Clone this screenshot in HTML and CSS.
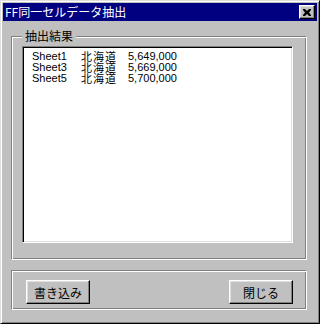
FILE: index.html
```html
<!DOCTYPE html>
<html lang="ja">
<head>
    <meta charset="UTF-8">
    <title>FF同一セルデータ抽出</title>
    <link rel="stylesheet" href="styles.css">
</head>
<body>
    <!-- Dialog window -->
    <div class="window">
        <div class="titlebar">
            <span class="title">FF同一セルデータ抽出</span>
            <button class="close-btn" aria-label="閉じる">
                <svg width="8" height="7" viewBox="0 0 8 7">
                    <path d="M0 0h2l2 2 2-2h2v1l-2 2.5 2 2.5v1h-2l-2-2-2 2h-2v-1l2-2.5-2-2.5z" fill="#000"/>
                </svg>
            </button>
        </div>

        <div class="dialog-body">
            <!-- Result group -->
            <div class="group result-group">
                <span class="group-label">抽出結果</span>
                <div class="listbox">
                    <div class="row"><span class="c-sheet">Sheet1</span><span class="c-pref">北海道</span><span class="c-num">5,649,000</span></div>
                    <div class="row"><span class="c-sheet">Sheet3</span><span class="c-pref">北海道</span><span class="c-num">5,669,000</span></div>
                    <div class="row"><span class="c-sheet">Sheet5</span><span class="c-pref">北海道</span><span class="c-num">5,700,000</span></div>
                </div>
            </div>

            <!-- Button group -->
            <div class="group button-group">
                <button class="btn btn-default">書き込み</button>
                <button class="btn">閉じる</button>
            </div>
        </div>
    </div>
</body>
</html>
```
FILE: styles.css
```css
/* General */
body {
    margin: 0;
    background: #c0c0c0;
    font-family: "Liberation Sans", "Noto Sans CJK JP", sans-serif;
    font-size: 12px;
}

/* Window frame */
.window {
    width: 320px;
    height: 324px;
    box-sizing: border-box;
    border: 1px solid;
    border-color: #dfdfdf #000 #000 #dfdfdf;
    box-shadow: inset 1px 1px #fff, inset -1px -1px #808080;
    padding: 2px;
    background: #c0c0c0;
    display: flex;
    flex-direction: column;
}

.titlebar {
    height: 18px;
    background: #000080;
    color: #fff;
    display: flex;
    align-items: center;
    justify-content: space-between;
    padding: 0 2px 0 2px;
}

.title {
    font-family: "Noto Sans CJK JP", sans-serif;
    font-size: 12px;
    line-height: 12px;
}

.close-btn {
    width: 16px;
    height: 14px;
    padding: 0;
    background: #c0c0c0;
    border: 1px solid;
    border-color: #fff #000 #000 #fff;
    box-shadow: inset -1px -1px #808080, inset 1px 1px #dfdfdf;
    display: flex;
    align-items: center;
    justify-content: center;
}

/* Dialog body */
.dialog-body {
    flex: 1;
    display: flex;
    flex-direction: column;
    gap: 10px;
    padding: 15px 10px 0 8px;
}

/* Etched group box */
.group {
    position: relative;
    border: 1px solid;
    border-color: #808080 #fff #fff #808080;
    box-shadow: inset 1px 1px #fff, inset -1px -1px #808080;
}

.group-label {
    position: absolute;
    top: -8px;
    left: 10px;
    padding: 0 3px;
    background: #c0c0c0;
    font-family: "Noto Sans CJK JP", sans-serif;
    line-height: 14px;
    color: #000;
}

.result-group {
    height: 224px;
    box-sizing: border-box;
    padding: 9px 13px 16px 10px;
}

/* Sunken list box */
.listbox {
    height: 100%;
    box-sizing: border-box;
    background: #fff;
    border: 1px solid;
    border-color: #808080 #fff #fff #808080;
    box-shadow: inset 1px 1px #000, inset -1px -1px #dfdfdf;
    padding: 4px 0 0 9px;
}

.row {
    display: flex;
    align-items: center;
    height: 11px;
    line-height: 11px;
    color: #000;
}

.c-sheet {
    width: 49px;
    font-size: 11px;
}

.c-pref {
    width: 47px;
    font-family: "Noto Sans CJK JP", sans-serif;
    font-size: 11px;
    letter-spacing: 1px;
}

.c-num {
    font-size: 11px;
}

/* Buttons */
.button-group {
    height: 40px;
    box-sizing: border-box;
    padding: 9px 13px 0 14px;
    display: flex;
    justify-content: space-between;
    align-items: flex-start;
}

.btn {
    width: 64px;
    height: 24px;
    background: #c0c0c0;
    border: 1px solid;
    border-color: #fff #000 #000 #fff;
    box-shadow: inset -1px -1px #808080, inset 1px 1px #dfdfdf;
    font-family: "Noto Sans CJK JP", sans-serif;
    font-size: 12px;
    color: #000;
    padding: 0;
}
```
